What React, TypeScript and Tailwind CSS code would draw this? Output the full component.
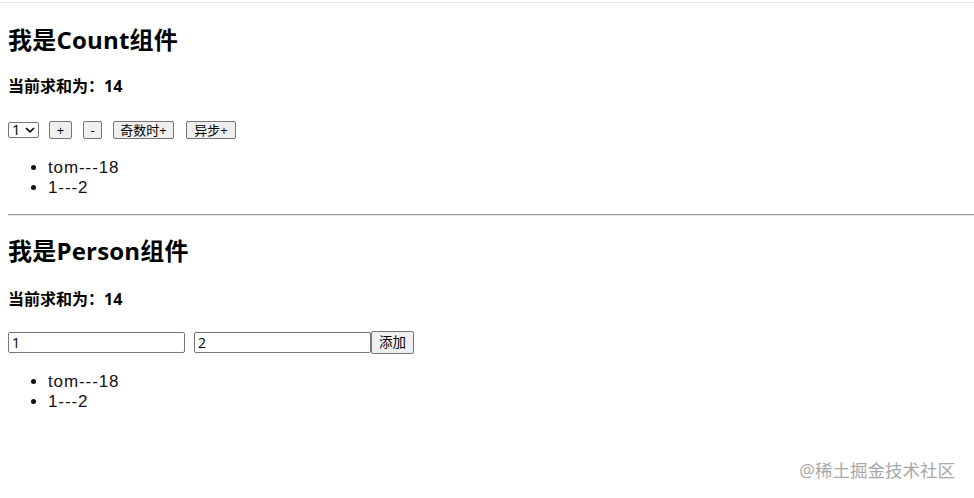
import React from "react";

const latin = '"Open Sans", "Noto Sans CJK SC", sans-serif';

function Btn({ children, w }: { children: React.ReactNode; w: string }) {
  return (
    <div
      className={`flex items-center justify-center h-[18px] ${w} bg-[#efefef] border border-[#767676] rounded-[2px] text-[13px] text-black leading-none`}
    >
      {children}
    </div>
  );
}

function List() {
  return (
    <ul
      className="pl-[40px] list-disc text-[17px] leading-[20px] text-[#111] tracking-[0.9px]"
      style={{ fontFamily: '"Liberation Sans", Arial, sans-serif' }}
    >
      <li className="h-[20px]">tom---18</li>
      <li className="h-[20px]">1---2</li>
    </ul>
  );
}

export default function App() {
  return (
    <div className="relative w-[974px] h-[498px] bg-white overflow-hidden text-black" style={{ fontFamily: latin }}>
      <div className="h-[1px] mt-[2px] bg-[#e3e3e3]" />
      <div className="px-[8px]">
        <h2 className="mt-[21px] h-[32px] leading-[32px] text-[24px] font-bold tracking-[0.2px]">我是Count组件</h2>
        <h4 className="mt-[20px] h-[20px] leading-[20px] text-[16px] font-bold">当前求和为：14</h4>
        <div className="mt-[25px] flex items-center h-[18px]">
          <div className="flex items-center justify-between w-[31px] h-[16px] border border-[#767676] rounded-[2px] pl-[3px] pr-[3px] text-[14.5px] leading-none">
            <span>1</span>
            <svg width="10" height="6" viewBox="0 0 10 6">
              <path d="M1 1 L5 4.8 L9 1" fill="none" stroke="#000" strokeWidth="1.7" />
            </svg>
          </div>
          <div className="ml-[10px]"><Btn w="w-[23px]">+</Btn></div>
          <div className="ml-[11px]"><Btn w="w-[19px]">-</Btn></div>
          <div className="ml-[11px]"><Btn w="w-[61px]">奇数时+</Btn></div>
          <div className="ml-[12px]"><Btn w="w-[50px]">异步+</Btn></div>
        </div>
        <div className="mt-[19px]"><List /></div>
      </div>
      <div className="ml-[8px] mt-[16px] h-[2px] border-t border-[#9a9a9a] border-b border-b-[#e8e8e8]" />
      <div className="px-[8px]">
        <h2 className="mt-[19px] h-[32px] leading-[32px] text-[24px] font-bold tracking-[0.2px]">我是Person组件</h2>
        <h4 className="mt-[22px] h-[20px] leading-[20px] text-[16px] font-bold">当前求和为：14</h4>
        <div className="mt-[22px] flex items-center h-[23px]">
          <div className="w-[177px] h-[21px] border border-[#767676] rounded-[2px] px-[3px] text-[14px] leading-[19px]">1</div>
          <div className="ml-[9px] w-[177px] h-[21px] border border-[#767676] rounded-[2px] px-[3px] text-[14px] leading-[19px]">2</div>
          <div className="flex items-center justify-center w-[43px] h-[23px] bg-[#efefef] border border-[#767676] rounded-[2px] text-[13.5px] leading-none">添加</div>
        </div>
        <div className="mt-[18px]"><List /></div>
      </div>
      <div className="absolute right-[19px] top-[458px] text-[17.5px] leading-[24px] text-[#a8a8a8]">@稀土掘金技术社区</div>
    </div>
  );
}
